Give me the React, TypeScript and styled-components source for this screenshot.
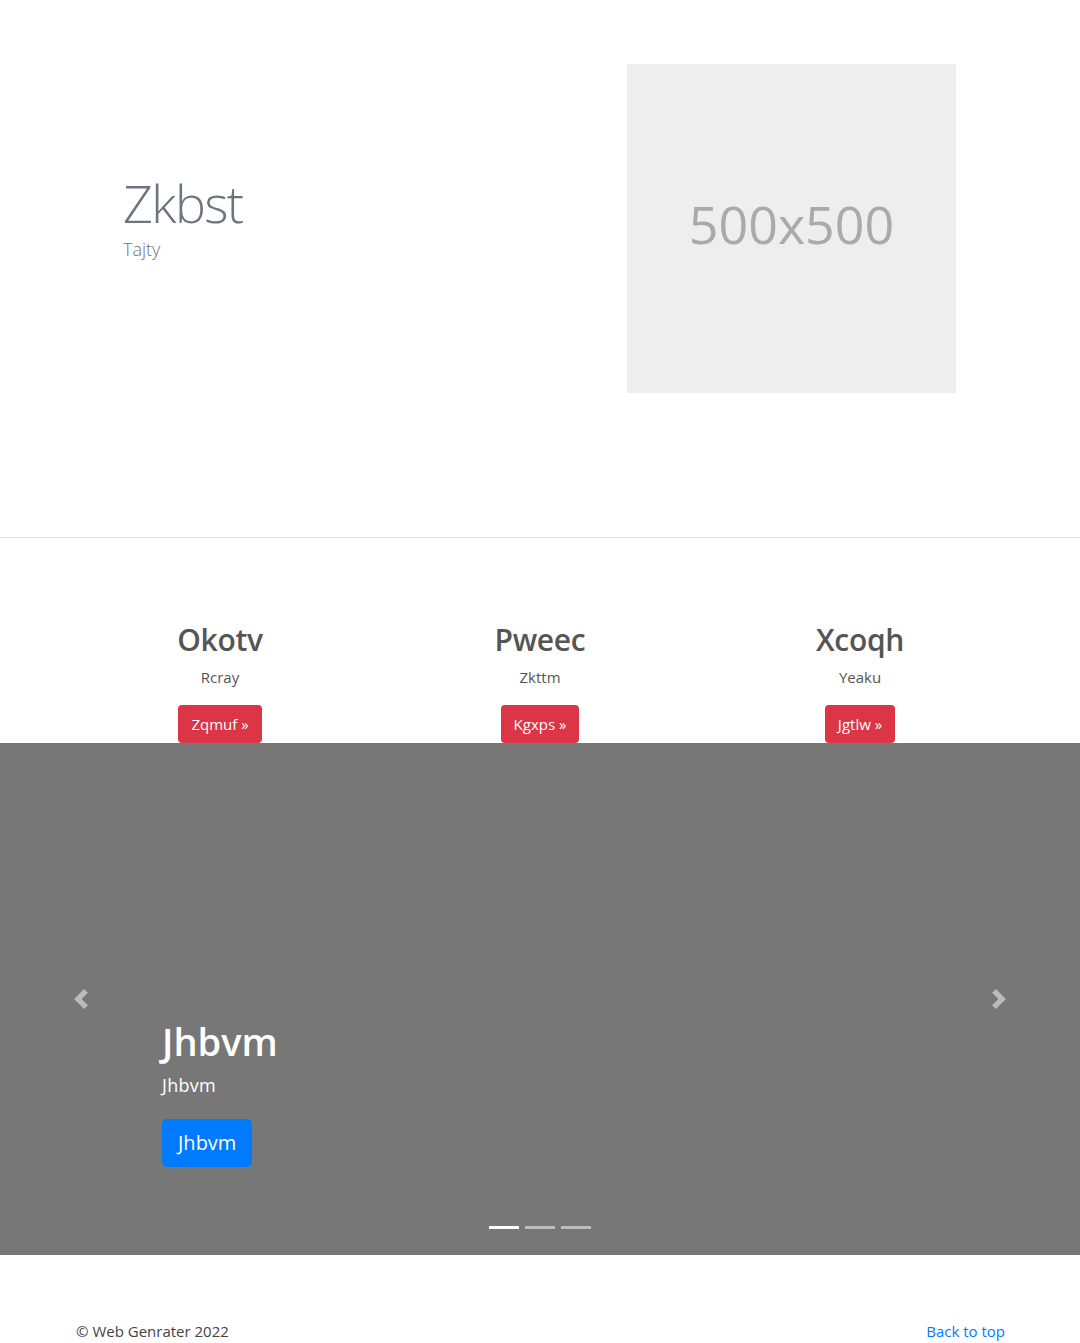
import React from 'react'
import styled, { createGlobalStyle } from 'styled-components'

const GlobalStyle = createGlobalStyle`
  html, body {
    margin: 0;
    padding: 0;
  }
  body {
    font-family: 'Open Sans', 'Noto Sans', sans-serif;
    font-size: 16px;
    line-height: 1.5;
    color: #212529;
    background: #fff;
  }
  * {
    box-sizing: border-box;
  }
`

const Hero = styled.section`
  border-bottom: 1px solid #e5e5e5;
  padding: 64px 0 144px;
`

const Container = styled.div`
  width: 960px;
  margin: 0 auto;
  padding: 0 15px;
`

const HeroRow = styled.div`
  display: grid;
  grid-template-columns: 1fr 1fr;
  align-items: center;
`

const HeroText = styled.div`
  padding-left: 48px;
  padding-bottom: 22px;
`

const Title = styled.h1`
  margin: 0;
  font-size: 52px;
  font-weight: 300;
  line-height: 1.2;
  color: #6c757d;
  letter-spacing: -1.6px;
`

const Lead = styled.p`
  margin: 2px 0 0;
  font-size: 18px;
  font-weight: 300;
  color: #6c757d;
`

const HeroMedia = styled.div`
  display: flex;
  justify-content: flex-end;
  padding-right: 49px;
`

const Placeholder = styled.div`
  width: 329px;
  height: 329px;
  background: #eeeeee;
  color: #aaaaaa;
  display: flex;
  align-items: center;
  justify-content: center;
  font-size: 52px;
  padding-bottom: 10px;
`

const Features = styled.section`
  padding-top: 84px;
`

const FeatureRow = styled.div`
  display: grid;
  grid-template-columns: repeat(3, 1fr);
  margin: 0 -15px;
`

const Feature = styled.div`
  text-align: center;
  padding: 0 15px;
`

const FeatureTitle = styled.h2`
  margin: 0 0 7px;
  font-size: 30px;
  font-weight: 600;
  line-height: 1.2;
  color: #555;
  letter-spacing: -0.3px;
`

const FeatureText = styled.p`
  margin: 0 0 16px;
  font-size: 15px;
  line-height: 24px;
  color: #555;
`

const Button = styled.a<{ $variant: 'danger' | 'primary'; $large?: boolean }>`
  display: inline-block;
  color: #fff;
  text-decoration: none;
  background: ${(p) => (p.$variant === 'danger' ? '#dc3545' : '#007bff')};
  font-size: ${(p) => (p.$large ? '20px' : '15px')};
  line-height: ${(p) => (p.$large ? '30px' : '24px')};
  padding: ${(p) => (p.$large ? '9px 16px' : '7px 13px')};
  border-radius: ${(p) => (p.$large ? '5px' : '4px')};
`

const Carousel = styled.section`
  position: relative;
  height: 512px;
  background: #777;
  display: flex;
  flex-direction: column;
  justify-content: flex-end;
  padding: 0 15% 88px;
`

const CaptionTitle = styled.h1`
  margin: 0 0 8px;
  font-size: 38px;
  font-weight: 600;
  line-height: 48px;
  color: #fff;
`

const CaptionText = styled.p`
  margin: 0 0 22px;
  font-size: 18px;
  line-height: 24px;
  color: #fff;
  letter-spacing: 0.3px;
`

const CaptionAction = styled.div`
  display: flex;
`

const Control = styled.a<{ $side: 'left' | 'right' }>`
  position: absolute;
  top: 0;
  bottom: 0;
  ${(p) => p.$side}: 0;
  width: 15%;
  display: flex;
  align-items: center;
  justify-content: center;
  opacity: 0.5;
  svg {
    width: 20px;
    height: 20px;
  }
`

const Indicators = styled.ol`
  position: absolute;
  left: 0;
  right: 0;
  bottom: 0;
  margin: 0 0 16px;
  padding: 0;
  list-style: none;
  display: flex;
  justify-content: center;
`

const Indicator = styled.li<{ $active?: boolean }>`
  width: 30px;
  height: 3px;
  margin: 10px 3px;
  background: #fff;
  opacity: ${(p) => (p.$active ? 1 : 0.5)};
`

const Footer = styled.footer`
  padding-top: 64px;
`

const FooterRow = styled.div`
  display: flex;
  justify-content: space-between;
  font-size: 15px;
  line-height: 24px;
  color: #444;
  padding-left: 1px;
`

const Link = styled.a`
  color: #007bff;
  text-decoration: none;
`

const features = [
  { title: 'Okotv', text: 'Rcray', action: 'Zqmuf' },
  { title: 'Pweec', text: 'Zkttm', action: 'Kgxps' },
  { title: 'Xcoqh', text: 'Yeaku', action: 'Jgtlw' },
]

export default function App() {
  return (
    <>
      <GlobalStyle />
      <Hero>
        <Container>
          <HeroRow>
            <HeroText>
              <Title>Zkbst</Title>
              <Lead>Tajty</Lead>
            </HeroText>
            <HeroMedia>
              <Placeholder>500x500</Placeholder>
            </HeroMedia>
          </HeroRow>
        </Container>
      </Hero>

      <Features>
        <Container>
          <FeatureRow>
            {features.map((f) => (
              <Feature key={f.title}>
                <FeatureTitle>{f.title}</FeatureTitle>
                <FeatureText>{f.text}</FeatureText>
                <Button $variant="danger" href="#">
                  {f.action} »
                </Button>
              </Feature>
            ))}
          </FeatureRow>
        </Container>
      </Features>

      <Carousel>
        <CaptionTitle>Jhbvm</CaptionTitle>
        <CaptionText>Jhbvm</CaptionText>
        <CaptionAction>
          <Button $variant="primary" $large href="#">
            Jhbvm
          </Button>
        </CaptionAction>
        <Control $side="left" href="#">
          <svg viewBox="0 0 8 8" fill="#fff">
            <path d="M5.25 0l-4 4 4 4 1.5-1.5L4.25 4l2.5-2.5L5.25 0z" />
          </svg>
        </Control>
        <Control $side="right" href="#">
          <svg viewBox="0 0 8 8" fill="#fff">
            <path d="M2.75 0l-1.5 1.5L3.75 4l-2.5 2.5L2.75 8l4-4-4-4z" />
          </svg>
        </Control>
        <Indicators>
          <Indicator $active />
          <Indicator />
          <Indicator />
        </Indicators>
      </Carousel>

      <Footer>
        <Container>
          <FooterRow>
            <span>© Web Genrater 2022</span>
            <Link href="#">Back to top</Link>
          </FooterRow>
        </Container>
      </Footer>
    </>
  )
}
